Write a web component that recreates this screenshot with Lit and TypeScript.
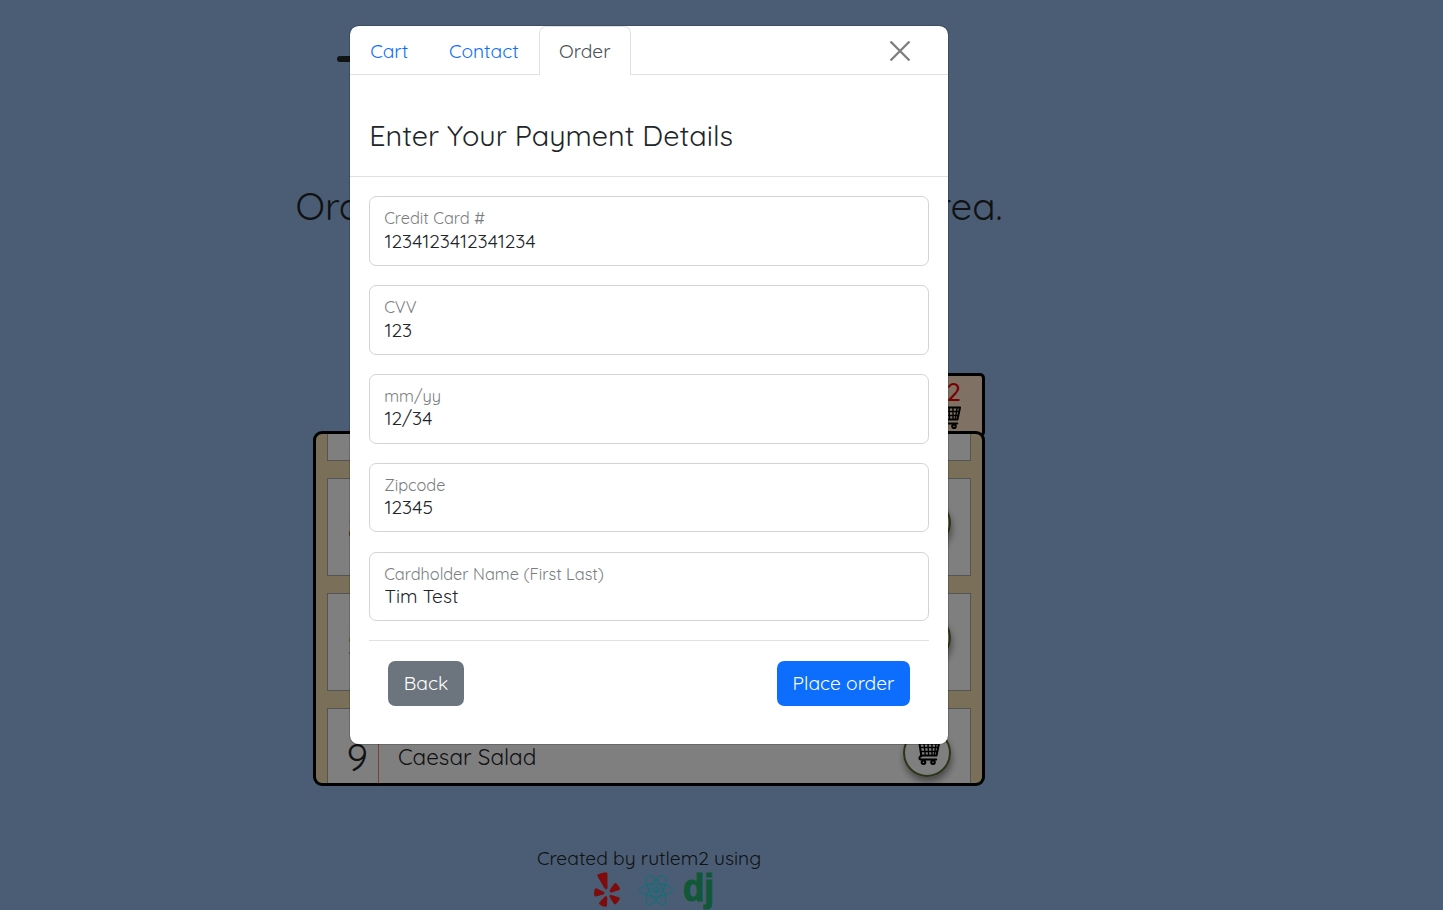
import { LitElement, html, css } from "lit";
import { customElement } from "lit/decorators.js";

const fields = [
  ["Credit Card #", "1234123412341234"],
  ["CVV", "123"],
  ["mm/yy", "12/34"],
  ["Zipcode", "12345"],
  ["Cardholder Name (First Last)", "Tim Test"],
];

@customElement("app-root")
export class AppRoot extends LitElement {
  static styles = css`
    :host { display: block; position: relative; width: 1443px; height: 910px; overflow: hidden; background: #96bae8; color: #212529; font: 400 19.2px/28.8px Quicksand, Lato, sans-serif; }
    * { box-sizing: border-box; }
    span { white-space: nowrap; }
    .page { width: 1298px; height: 910px; display: flex; flex-direction: column; align-items: center; }
    .bar { width: 312px; height: 6px; border-radius: 3px; background: #212529; margin: 56px 312px 0 0; }
    .tagline { width: 707px; margin-top: 117px; height: 54px; line-height: 54px; font-size: 38.4px; display: flex; justify-content: space-between; }
    .menuwrap { width: 672px; margin-top: 140px; display: flex; flex-direction: column; align-items: flex-end; }
    .tab { width: 92px; height: 64px; border: 3px solid #000; border-radius: 5px; background: #ffe4c8; margin-bottom: -6px; padding: 2px 21px 0 0; display: flex; flex-direction: column; align-items: flex-end; color: #e80000; font-size: 26px; line-height: 28px; font-weight: 500; }
    .cart { flex: none; width: 24px; height: 24px; fill: none; stroke: #000; stroke-width: 2; stroke-linecap: round; stroke-linejoin: round; }
    .tab .cart { margin-top: -1px; }
    .menu { position: relative; width: 672px; height: 355px; border: 3px solid #000; border-radius: 9px; background: #f5deb3; overflow: hidden; padding: 0 11px; display: flex; flex-direction: column; gap: 17px; }
    .item { flex: none; height: 98px; border: 1px solid #a9a9a9; background: #fff; display: flex; align-items: center; }
    .item.first { height: 27px; border-top: 0; }
    .num { width: 51px; height: 96px; border-right: 1px solid #fa8072; display: flex; align-items: center; justify-content: flex-end; padding: 0 10px 0 0; font-size: 38.4px; }
    .dish { flex: 1; padding-left: 19px; font-size: 22.4px; }
    .round { width: 48px; height: 48px; border: 2px solid #556b2f; border-radius: 50%; margin: -8px 19px 0 0; display: flex; align-items: center; justify-content: center; padding-left: 1px; box-shadow: 1px 5px 7px rgba(0,0,0,.42); }
    .foot { margin-top: 58px; display: flex; flex-direction: column; align-items: center; }
    .icons { display: flex; align-items: center; height: 36px; gap: 19px; margin: -1px 0 0 8px; }
    .yelp { width: 26px; height: 35px; fill: #ff1818; }
    .react { width: 34px; height: 34px; fill: none; stroke: #10e4ee; stroke-width: .9; }
    .dj { width: 30px; height: 38px; margin-left: -9px; overflow: visible; }
    .djtext { font: 700 38px "Liberation Sans", sans-serif; fill: #22b070; stroke: #22b070; stroke-width: 1.2; }
    .shade { position: absolute; inset: 0; background: rgba(0,0,0,.5); }
    .modal { position: absolute; left: 349px; top: 25px; width: 600px; height: 720px; border: 1px solid rgba(0,0,0,.175); border-radius: 9.6px; background: #fff; background-clip: padding-box; display: flex; flex-direction: column; }
    .tabs { height: 49px; border-bottom: 1px solid #dee2e6; display: flex; align-items: flex-start; }
    .link { height: 49px; padding: 10px 19px 0 19.2px; border: 1px solid transparent; border-width: 1px 1px 0; color: #0d6efd; line-height: 29px; }
    .link.c1 { width: 78px; }
    .link.c2 { width: 111px; padding-left: 19.9px; }
    .link.on { width: 92px; padding-left: 19px; color: #495057; background: #fff; border-color: #dee2e6; border-radius: 7.2px 7.2px 0 0; }
    .close { width: 20px; height: 20px; margin: 14.8px 38px 0 auto; opacity: .5; }
    .head { height: 102px; padding: 37px 19.2px 0; border-bottom: 1px solid #dee2e6; font-size: 28.8px; line-height: 46px; }
    .body { flex: 1; padding: 19.4px 19px 0; display: flex; flex-direction: column; gap: 19.2px; }
    .field { flex: none; height: 69.6px; border: 1px solid #ced4da; border-radius: 7.2px; padding: 10px 14.2px 0; display: flex; flex-direction: column; }
    .lab { font-size: 16.32px; line-height: 22.4px; color: #7a7d80; }
    .val { line-height: 23px; padding-left: .2px; }
    .actions { border-top: 1px solid #dee2e6; padding: 19.6px 19px 0; display: flex; justify-content: space-between; }
    .btn { height: 45px; width: 76px; border-radius: 7.2px; background: #6c757d; color: #fff; display: flex; align-items: center; justify-content: center; padding-bottom: .6px; }
    .btn.go { width: 133px; background: #0d6efd; }
  `;

  private cartIcon() {
    return html`<svg class="cart" viewBox="0 0 24 24">
      <path d="M.8 1H3.200L5.300 14.500H20.500L23 2.500H3.500" />
      <path d="M4.500 6.500H22M5.200 10.500H21.300M8 3L9.300 14M12 3L12.600 14M16 3V14M20 3L18.300 14" stroke-width="1.400" />
      <path d="M5.500 14.800C2.500 16 2.800 18.500 5.500 18.500H20.200" />
      <circle cx="7.500" cy="21.200" r="1.800" /><circle cx="17" cy="21.200" r="1.800" />
    </svg>`;
  }

  private item(n: string, name: string) {
    return html`<div class="item"><div class="num"><span>${n}</span></div><span class="dish">${name}</span><div class="round">${this.cartIcon()}</div></div>`;
  }

  render() {
    return html`
      <div class="page">
        <div class="bar"></div>
        <div class="tagline"><span>Ord</span><span>rea.</span></div>
        <div class="menuwrap">
          <div class="tab"><span>2</span>${this.cartIcon()}</div>
          <div class="menu">
            <div class="item first"></div>
            ${this.item("8", "")}${this.item("5", "")}${this.item("9", "Caesar Salad")}
          </div>
        </div>
        <div class="foot">
          <span>Created by rutlem2 using</span>
          <div class="icons">
            <svg class="yelp" viewBox="0 0 384 512"><path d="M42.9 240.32l99.62 48.61c19.2 9.4 16.2 37.51-4.5 42.71L30.5 358.45a22.79 22.79 0 0 1-28.21-19.6 197.16 197.16 0 0 1 9-85.32 22.8 22.8 0 0 1 31.61-13.21zm44 239.25a199.45 199.45 0 0 0 79.42 32.11A22.78 22.78 0 0 0 192.94 490l3.9-110.82c.7-21.3-25.5-31.91-39.81-16.1l-74.21 82.4a22.82 22.82 0 0 0 4.09 34.09zm145.34-109.92l58.81 94a22.93 22.93 0 0 0 34 5.5 198.36 198.36 0 0 0 52.71-67.61A23 23 0 0 0 364.17 370l-105.42-34.26c-20.31-6.5-37.81 15.8-26.51 33.91zm148.33-132.23a197.44 197.44 0 0 0-50.41-69.31 22.85 22.85 0 0 0-34 4.4l-62 91.92c-11.9 17.7 4.7 40.61 25.2 34.71L366 268.63a23 23 0 0 0 14.61-31.21zM62.11 30.18a22.86 22.86 0 0 0-9.9 32l104.12 180.44c11.7 20.2 42.61 11.9 42.61-11.4V22.88a22.67 22.67 0 0 0-24.5-22.8 320.37 320.37 0 0 0-112.33 30.1z" /></svg>
            <svg class="react" viewBox="-17 -17 34 34">
              <ellipse rx="16.500" ry="6.300" /><ellipse rx="16.500" ry="6.300" transform="rotate(60)" /><ellipse rx="16.500" ry="6.300" transform="rotate(120)" />
              <circle r="3" /><circle r="1.300" />
            </svg>
            <svg class="dj" viewBox="0 0 30 38"><text class="djtext" x="0" y="29.500" textLength="31" lengthAdjust="spacingAndGlyphs">dj</text></svg>
          </div>
        </div>
      </div>
      <div class="shade"></div>
      <div class="modal">
        <div class="tabs">
          <span class="link c1">Cart</span><span class="link c2">Contact</span><span class="link on">Order</span>
          <svg class="close" viewBox="0 0 16 16"><path d="M1 1L15 15M15 1L1 15" stroke="#000" stroke-width="1.900" stroke-linecap="round" /></svg>
        </div>
        <div class="head"><span>Enter Your Payment Details</span></div>
        <div class="body">
          ${fields.map(([label, value]) => html`<div class="field"><span class="lab">${label}</span><span class="val">${value}</span></div>`)}
          <div class="actions"><div class="btn"><span>Back</span></div><div class="btn go"><span>Place order</span></div></div>
        </div>
      </div>`;
  }
}
